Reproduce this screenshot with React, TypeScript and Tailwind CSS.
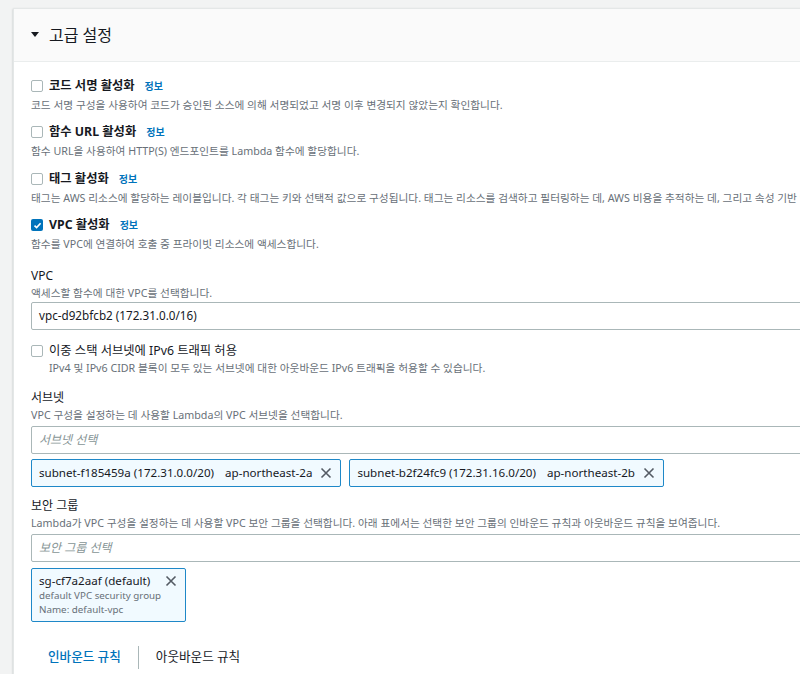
const font = { fontFamily: '"Noto Sans", "Noto Sans CJK KR", sans-serif' };

function Checkbox({ checked = false }: { checked?: boolean }) {
  if (checked) {
    return (
      <span className="flex h-3 w-3 shrink-0 items-center justify-center rounded-[2px] bg-[#0073bb]">
        <svg width="9" height="9" viewBox="0 0 9 9">
          <path d="M1.5 4.6 L3.6 6.6 L7.6 2.2" fill="none" stroke="#fff" strokeWidth="1.6" />
        </svg>
      </span>
    );
  }
  return <span className="h-3 w-3 shrink-0 rounded-[2px] border border-[#aab7b8] bg-white" />;
}

function XIcon() {
  return (
    <svg width="12" height="12" viewBox="0 0 12 12" className="shrink-0">
      <path d="M1.5 1.5 L10.5 10.5 M10.5 1.5 L1.5 10.5" stroke="#545b64" strokeWidth="1.6" fill="none" />
    </svg>
  );
}

function Toggle({ label, desc, checked, className = '' }: { label: string; desc: string; checked?: boolean; className?: string }) {
  return (
    <div className={className}>
      <div className="flex h-[20px] items-center">
        <Checkbox checked={checked} />
        <span className="ml-[6px] text-[12.3px] font-bold text-[#16191f]">{label}</span>
        <span className="ml-[10px] text-[10px] font-bold text-[#0073bb]">정보</span>
      </div>
      <p className="mt-[1px] whitespace-nowrap text-[10.7px] leading-[16px] text-[#687078]">{desc}</p>
    </div>
  );
}

function SubnetToken({ id, az }: { id: string; az: string }) {
  return (
    <div className="flex h-[28px] items-center rounded-[2px] border border-[#1e88c8] bg-[#f1faff] pl-[7px] pr-[8px] text-[11.6px] text-[#16191f]">
      <span>{id}</span>
      <span className="ml-[11px]">{az}</span>
      <span className="ml-[8px]">
        <XIcon />
      </span>
    </div>
  );
}

export default function App() {
  return (
    <div style={font} className="h-[674px] w-[800px] overflow-hidden bg-[#f2f3f3] pl-[13px] pt-[8px]">
      <div className="w-[830px] border-l border-t border-[#e4e7e7] bg-white shadow-[0_1px_2px_rgba(0,28,36,0.25)]">
        <div className="flex h-[53px] items-center border-b border-[#eaeded] bg-[#fafafa] pl-[17px]">
          <svg width="8" height="6" viewBox="0 0 8 6">
            <polygon points="0,0 8,0 4,5" fill="#16191f" />
          </svg>
          <span className="ml-[10px] text-[16px] text-[#16191f]">고급 설정</span>
        </div>

        <div className="px-[17px] pt-[14px] pb-[20px]">
          <Toggle
            label="코드 서명 활성화"
            desc="코드 서명 구성을 사용하여 코드가 승인된 소스에 의해 서명되었고 서명 이후 변경되지 않았는지 확인합니다."
          />
          <Toggle
            className="mt-[9px]"
            label="함수 URL 활성화"
            desc="함수 URL을 사용하여 HTTP(S) 엔드포인트를 Lambda 함수에 할당합니다."
          />
          <Toggle
            className="mt-[10px]"
            label="태그 활성화"
            desc="태그는 AWS 리소스에 할당하는 레이블입니다. 각 태그는 키와 선택적 값으로 구성됩니다. 태그는 리소스를 검색하고 필터링하는 데, AWS 비용을 추적하는 데, 그리고 속성 기반 액세스 제어에 사용할 수 있습니다."
          />
          <Toggle
            className="mt-[9px]"
            checked
            label="VPC 활성화"
            desc="함수를 VPC에 연결하여 호출 중 프라이빗 리소스에 액세스합니다."
          />

          <div className="mt-[15px] text-[12px] leading-[18px] text-[#16191f]">VPC</div>
          <p className="text-[10.7px] leading-[16px] text-[#687078]">액세스할 함수에 대한 VPC를 선택합니다.</p>
          <div className="mt-[1px] flex h-[28px] items-center rounded-[2px] border border-[#aab7b8] pl-[7px] text-[11.7px] text-[#16191f]">
            vpc-d92bfcb2 (172.31.0.0/16)
          </div>

          <div className="mt-[12px] flex h-[18px] items-center">
            <Checkbox />
            <span className="ml-[6px] text-[12.3px] text-[#16191f]">이중 스택 서브넷에 IPv6 트래픽 허용</span>
          </div>
          <p className="pl-[18px] text-[10.7px] leading-[16px] text-[#687078]">
            IPv4 및 IPv6 CIDR 블록이 모두 있는 서브넷에 대한 아웃바운드 IPv6 트래픽을 허용할 수 있습니다.
          </p>

          <div className="mt-[13px] text-[12px] leading-[18px] text-[#16191f]">서브넷</div>
          <p className="text-[10.7px] leading-[16px] text-[#687078]">VPC 구성을 설정하는 데 사용할 Lambda의 VPC 서브넷을 선택합니다.</p>
          <div className="mt-[3px] flex h-[28px] items-center rounded-[2px] border border-[#aab7b8] pl-[7px] text-[12px] italic text-[#879596]">
            서브넷 선택
          </div>
          <div className="mt-[5px] flex gap-[8px]">
            <SubnetToken id="subnet-f185459a (172.31.0.0/20)" az="ap-northeast-2a" />
            <SubnetToken id="subnet-b2f24fc9 (172.31.16.0/20)" az="ap-northeast-2b" />
          </div>

          <div className="mt-[10px] text-[12px] leading-[18px] text-[#16191f]">보안 그룹</div>
          <p className="whitespace-nowrap text-[10.7px] leading-[16px] text-[#687078]">
            Lambda가 VPC 구성을 설정하는 데 사용할 VPC 보안 그룹을 선택합니다. 아래 표에서는 선택한 보안 그룹의 인바운드 규칙과 아웃바운드 규칙을 보여줍니다.
          </p>
          <div className="mt-[3px] flex h-[28px] items-center rounded-[2px] border border-[#aab7b8] pl-[7px] text-[12px] italic text-[#879596]">
            보안 그룹 선택
          </div>
          <div className="mt-[6px] flex h-[54px] w-[155px] items-start justify-between rounded-[2px] border border-[#1e88c8] bg-[#f1faff] pl-[7px] pr-[8px] pt-[4px]">
            <div>
              <div className="text-[11.6px] leading-[16px] text-[#16191f]">sg-cf7a2aaf (default)</div>
              <div className="text-[9.8px] leading-[14px] text-[#687078]">default VPC security group</div>
              <div className="text-[9.8px] leading-[14px] text-[#687078]">Name: default-vpc</div>
            </div>
            <span className="mt-[2px]">
              <XIcon />
            </span>
          </div>

          <div className="mt-[24px] flex h-[23px] items-center pl-[17px] text-[12.6px]">
            <span className="font-medium text-[#0073bb]">인바운드 규칙</span>
            <span className="mx-[17px] h-[23px] w-px bg-[#aab7b8]" />
            <span className="text-[#16191f]">아웃바운드 규칙</span>
          </div>
        </div>
      </div>
    </div>
  );
}
